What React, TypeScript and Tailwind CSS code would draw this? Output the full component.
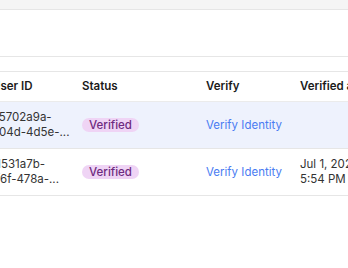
import React, { useLayoutEffect, useRef } from "react";

const rows = [
  {
    line1: "e5702a9a-",
    line2: "b04d-4d5e-...",
    date: null as null | [string, string],
    selected: true,
  },
  {
    line1: "f1531a7b-",
    line2: "ff6f-478a-...",
    date: ["Jul 1, 2025,", "5:54 PM"] as [string, string],
    selected: false,
  },
];

export default function App() {
  const scroller = useRef<HTMLDivElement>(null);
  useLayoutEffect(() => {
    if (scroller.current) scroller.current.scrollLeft = 20;
  }, []);

  return (
    <div
      className="w-[348px] h-[268px] bg-white overflow-hidden flex flex-col"
      style={{ fontFamily: "Inter, 'Liberation Sans', sans-serif" }}
    >
      <div className="h-[10px] shrink-0 bg-[#f5f5f5] border-b border-[#e6e6e6]" />
      <div className="h-[47px] shrink-0 border-b border-[#e6e6e6]" />
      <div className="h-[14px] shrink-0" />
      <div ref={scroller} className="overflow-hidden border-t border-[#e6e6e6]">
        <div className="w-[520px]">
          <div className="grid grid-cols-[90px_124px_94px_212px] h-[30px] items-center border-b border-[#ebebeb] text-[11.5px] font-semibold text-[#1a1a1a]">
            <div className="pl-3">User ID</div>
            <div className="pl-3">Status</div>
            <div className="pl-3">Verify</div>
            <div className="pl-3">Verified at</div>
          </div>
          {rows.map((r, i) => (
            <div
              key={i}
              className={
                "grid grid-cols-[90px_124px_94px_212px] h-[47px] items-center border-b border-[#e6e6e6] text-[11.5px] leading-[15px] text-[#333333] " +
                (r.selected ? "bg-[#eef2fd]" : "bg-white")
              }
            >
              <div className="pl-3 whitespace-nowrap">
                <div>{r.line1}</div>
                <div>{r.line2}</div>
              </div>
              <div className="pl-3">
                <span className="inline-flex items-center h-[14px] px-[7px] rounded-full bg-[#efd4f5] text-[#6e2b80] text-[11.5px] font-medium leading-none">
                  Verified
                </span>
              </div>
              <div className="pl-3">
                <span className="text-[#4a7cf2] whitespace-nowrap">Verify Identity</span>
              </div>
              <div className="pl-3 whitespace-nowrap">
                {r.date && (
                  <>
                    <div>{r.date[0]}</div>
                    <div>{r.date[1]}</div>
                  </>
                )}
              </div>
            </div>
          ))}
        </div>
      </div>
    </div>
  );
}
